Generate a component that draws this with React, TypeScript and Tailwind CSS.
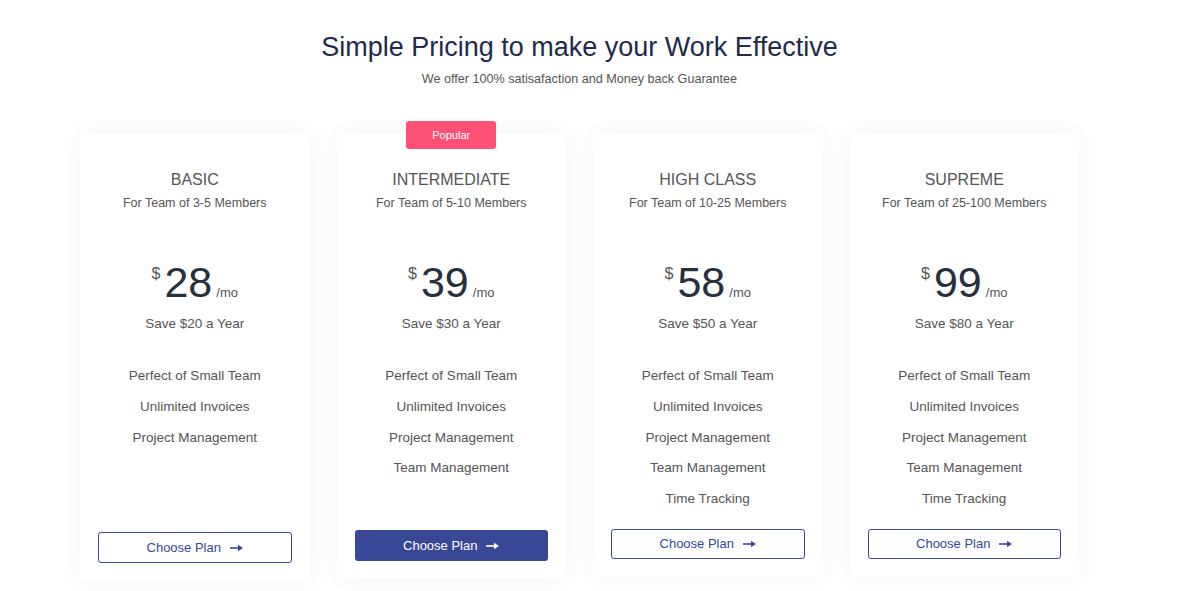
const plans = [
  {
    name: 'BASIC',
    team: 'For Team of 3-5 Members',
    price: '28',
    save: 'Save $20 a Year',
    features: ['Perfect of Small Team', 'Unlimited Invoices', 'Project Management'],
    listH: 'h-[165px]',
    btnH: 'h-[31px]',
  },
  {
    name: 'INTERMEDIATE',
    team: 'For Team of 5-10 Members',
    price: '39',
    save: 'Save $30 a Year',
    features: ['Perfect of Small Team', 'Unlimited Invoices', 'Project Management', 'Team Management'],
    popular: true,
    listH: 'h-[163px]',
    btnH: 'h-[31px]',
  },
  {
    name: 'HIGH CLASS',
    team: 'For Team of 10-25 Members',
    price: '58',
    save: 'Save $50 a Year',
    features: ['Perfect of Small Team', 'Unlimited Invoices', 'Project Management', 'Team Management', 'Time Tracking'],
    listH: 'h-[162px]',
    btnH: 'h-[30px]',
  },
  {
    name: 'SUPREME',
    team: 'For Team of 25-100 Members',
    price: '99',
    save: 'Save $80 a Year',
    features: ['Perfect of Small Team', 'Unlimited Invoices', 'Project Management', 'Team Management', 'Time Tracking'],
    listH: 'h-[162px]',
    btnH: 'h-[30px]',
  },
];

function LongArrow() {
  return (
    <svg width="13" height="8" viewBox="0 0 13 8" fill="currentColor">
      <rect x="0" y="3.2" width="9" height="1.6" />
      <polygon points="8,0.8 13,4 8,7.2" />
    </svg>
  );
}

export default function App() {
  return (
    <div className="min-h-[591px] bg-white font-['Liberation_Sans',Arial,sans-serif]">
      <div className="w-[999px] ml-[80px] pt-[31px]">
        <div className="text-center">
          <h1 className="text-[27px] leading-[33px] text-[#222a4d]">Simple Pricing to make your Work Effective</h1>
          <p className="mt-[7px] text-[12.6px] leading-[16px] text-[#555]">We offer 100% satisafaction and Money back Guarantee</p>
        </div>

        <div className="grid grid-cols-4 gap-[27px] items-start mt-[46px]">
          {plans.map((plan) => (
            <div
              key={plan.name}
              className="relative bg-white rounded-[2px] shadow-[0_0_24px_rgba(0,0,0,0.05)] px-[18px] pt-[37px] pb-[18px] text-center"
            >
              {plan.popular && (
                <div className="absolute left-1/2 -translate-x-1/2 -top-[12px] w-[90px] h-[28px] rounded-[3px] bg-[#fc5174] text-white text-[11px] flex items-center justify-center">
                  Popular
                </div>
              )}
              <h3 className="text-[16px] leading-[20px] text-[#555]">{plan.name}</h3>
              <p className="mt-[4px] text-[12.5px] leading-[18px] text-[#555]">{plan.team}</p>

              <div className="mt-[48px] flex items-start justify-center text-[#27313d]">
                <span className="text-[16px] leading-[20px] mt-[4px] text-[#555]">$</span>
                <span className="text-[43px] leading-[44px] mx-[4px]">{plan.price}</span>
                <span className="text-[13px] leading-[16px] mt-[25px] text-[#555]">/mo</span>
              </div>
              <p className="mt-[11px] text-[13.5px] leading-[18px] text-[#555]">{plan.save}</p>

              <ul className={`mt-[34px] ${plan.listH} text-[13.5px] text-[#555]`}>
                {plan.features.map((f) => (
                  <li key={f} className="leading-[18px] mb-[12.75px]">{f}</li>
                ))}
              </ul>

              <button
                className={
                  plan.popular
                    ? `w-full ${plan.btnH} rounded-[3px] bg-[#394896] text-white text-[13px] flex items-center justify-center gap-[9px]`
                    : `w-full ${plan.btnH} rounded-[3px] border border-[#394896] bg-white text-[#394896] text-[13px] flex items-center justify-center gap-[9px]`
                }
              >
                Choose Plan
                <LongArrow />
              </button>
            </div>
          ))}
        </div>
      </div>
    </div>
  );
}
